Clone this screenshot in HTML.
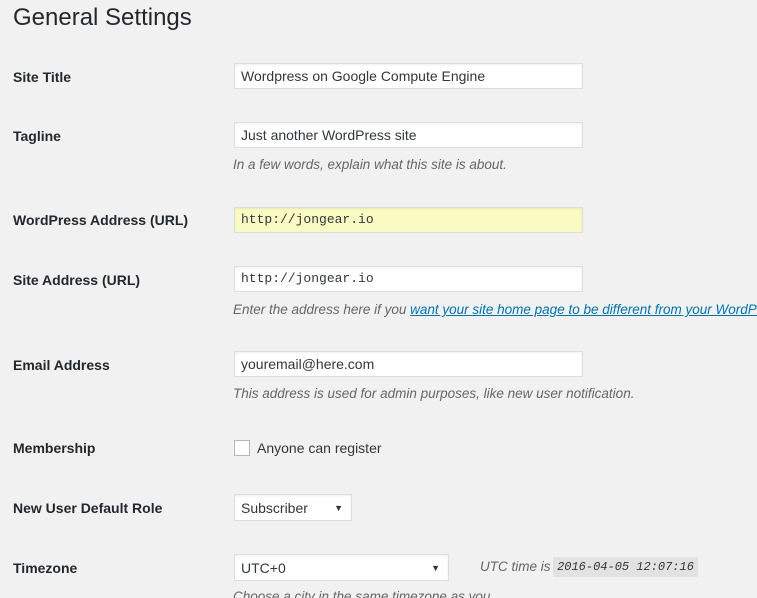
<!DOCTYPE html>
<html><head><meta charset="utf-8"><style>
html,body{overflow:hidden}
body{margin:0;width:757px;height:598px;background:#f1f1f1;font-family:"Liberation Sans",sans-serif;color:#23282d;position:relative}
.a{position:absolute;white-space:nowrap}
h1{position:absolute;left:13px;top:4px;margin:0;font-size:24px;font-weight:400;color:#23282d}
.l{position:absolute;left:13px;font-size:14px;font-weight:bold;color:#23282d}
.i{position:absolute;left:234px;width:349px;height:26px;background:#fff;border:1px solid #ddd;box-shadow:inset 0 1px 2px rgba(0,0,0,.07);box-sizing:border-box;font-size:14px;line-height:24px;padding-left:6px;color:#32373c}
.m{font-family:"Liberation Mono",monospace;font-size:13px}
.d{position:absolute;left:233px;font-size:13.5px;font-style:italic;color:#666;white-space:nowrap;max-width:524px;overflow:hidden}
.s::after{content:"▼";position:absolute;right:8px;top:0;font-size:9px;color:#333}
</style></head><body>
<h1>General Settings</h1>
<div class="l" style="top:69px">Site Title</div>
<div class="i" style="top:63px">Wordpress on Google Compute Engine</div>
<div class="l" style="top:128px">Tagline</div>
<div class="i" style="top:122px">Just another WordPress site</div>
<div class="d" style="top:157px">In a few words, explain what this site is about.</div>
<div class="l" style="top:212px">WordPress Address (URL)</div>
<div class="i m" style="top:207px;background:#fafac3">http://jongear.io</div>
<div class="l" style="top:272px">Site Address (URL)</div>
<div class="i m" style="top:266px">http://jongear.io</div>
<div class="d" style="top:302px">Enter the address here if you <span style="color:#0073aa;text-decoration:underline">want your site home page to be different from your WordPress installation directory</span></div>
<div class="l" style="top:357px">Email Address</div>
<div class="i" style="top:351px">youremail@here.com</div>
<div class="d" style="top:386px">This address is used for admin purposes, like new user notification.</div>
<div class="l" style="top:440px">Membership</div>
<div class="a" style="left:234px;top:440px;width:14px;height:14px;background:#fff;border:1px solid #b4b9be"></div>
<div class="a" style="left:257px;top:440px;font-size:14px;color:#32373c">Anyone can register</div>
<div class="l" style="top:500px">New User Default Role</div>
<div class="i s" style="top:494px;width:118px;height:27px;line-height:27px">Subscriber</div>
<div class="l" style="top:560px">Timezone</div>
<div class="i s" style="top:554px;width:215px;height:27px;line-height:27px">UTC+0</div>
<div class="d" style="left:480px;top:559px">UTC time is</div>
<div class="a m" style="left:553px;top:557px;width:145px;height:20px;background:#e2e2e2;font-style:italic;font-size:12px;line-height:20px;text-align:center;color:#333">2016-04-05 12:07:16</div>
<div class="d" style="top:589px">Choose a city in the same timezone as you.</div>
</body></html>
